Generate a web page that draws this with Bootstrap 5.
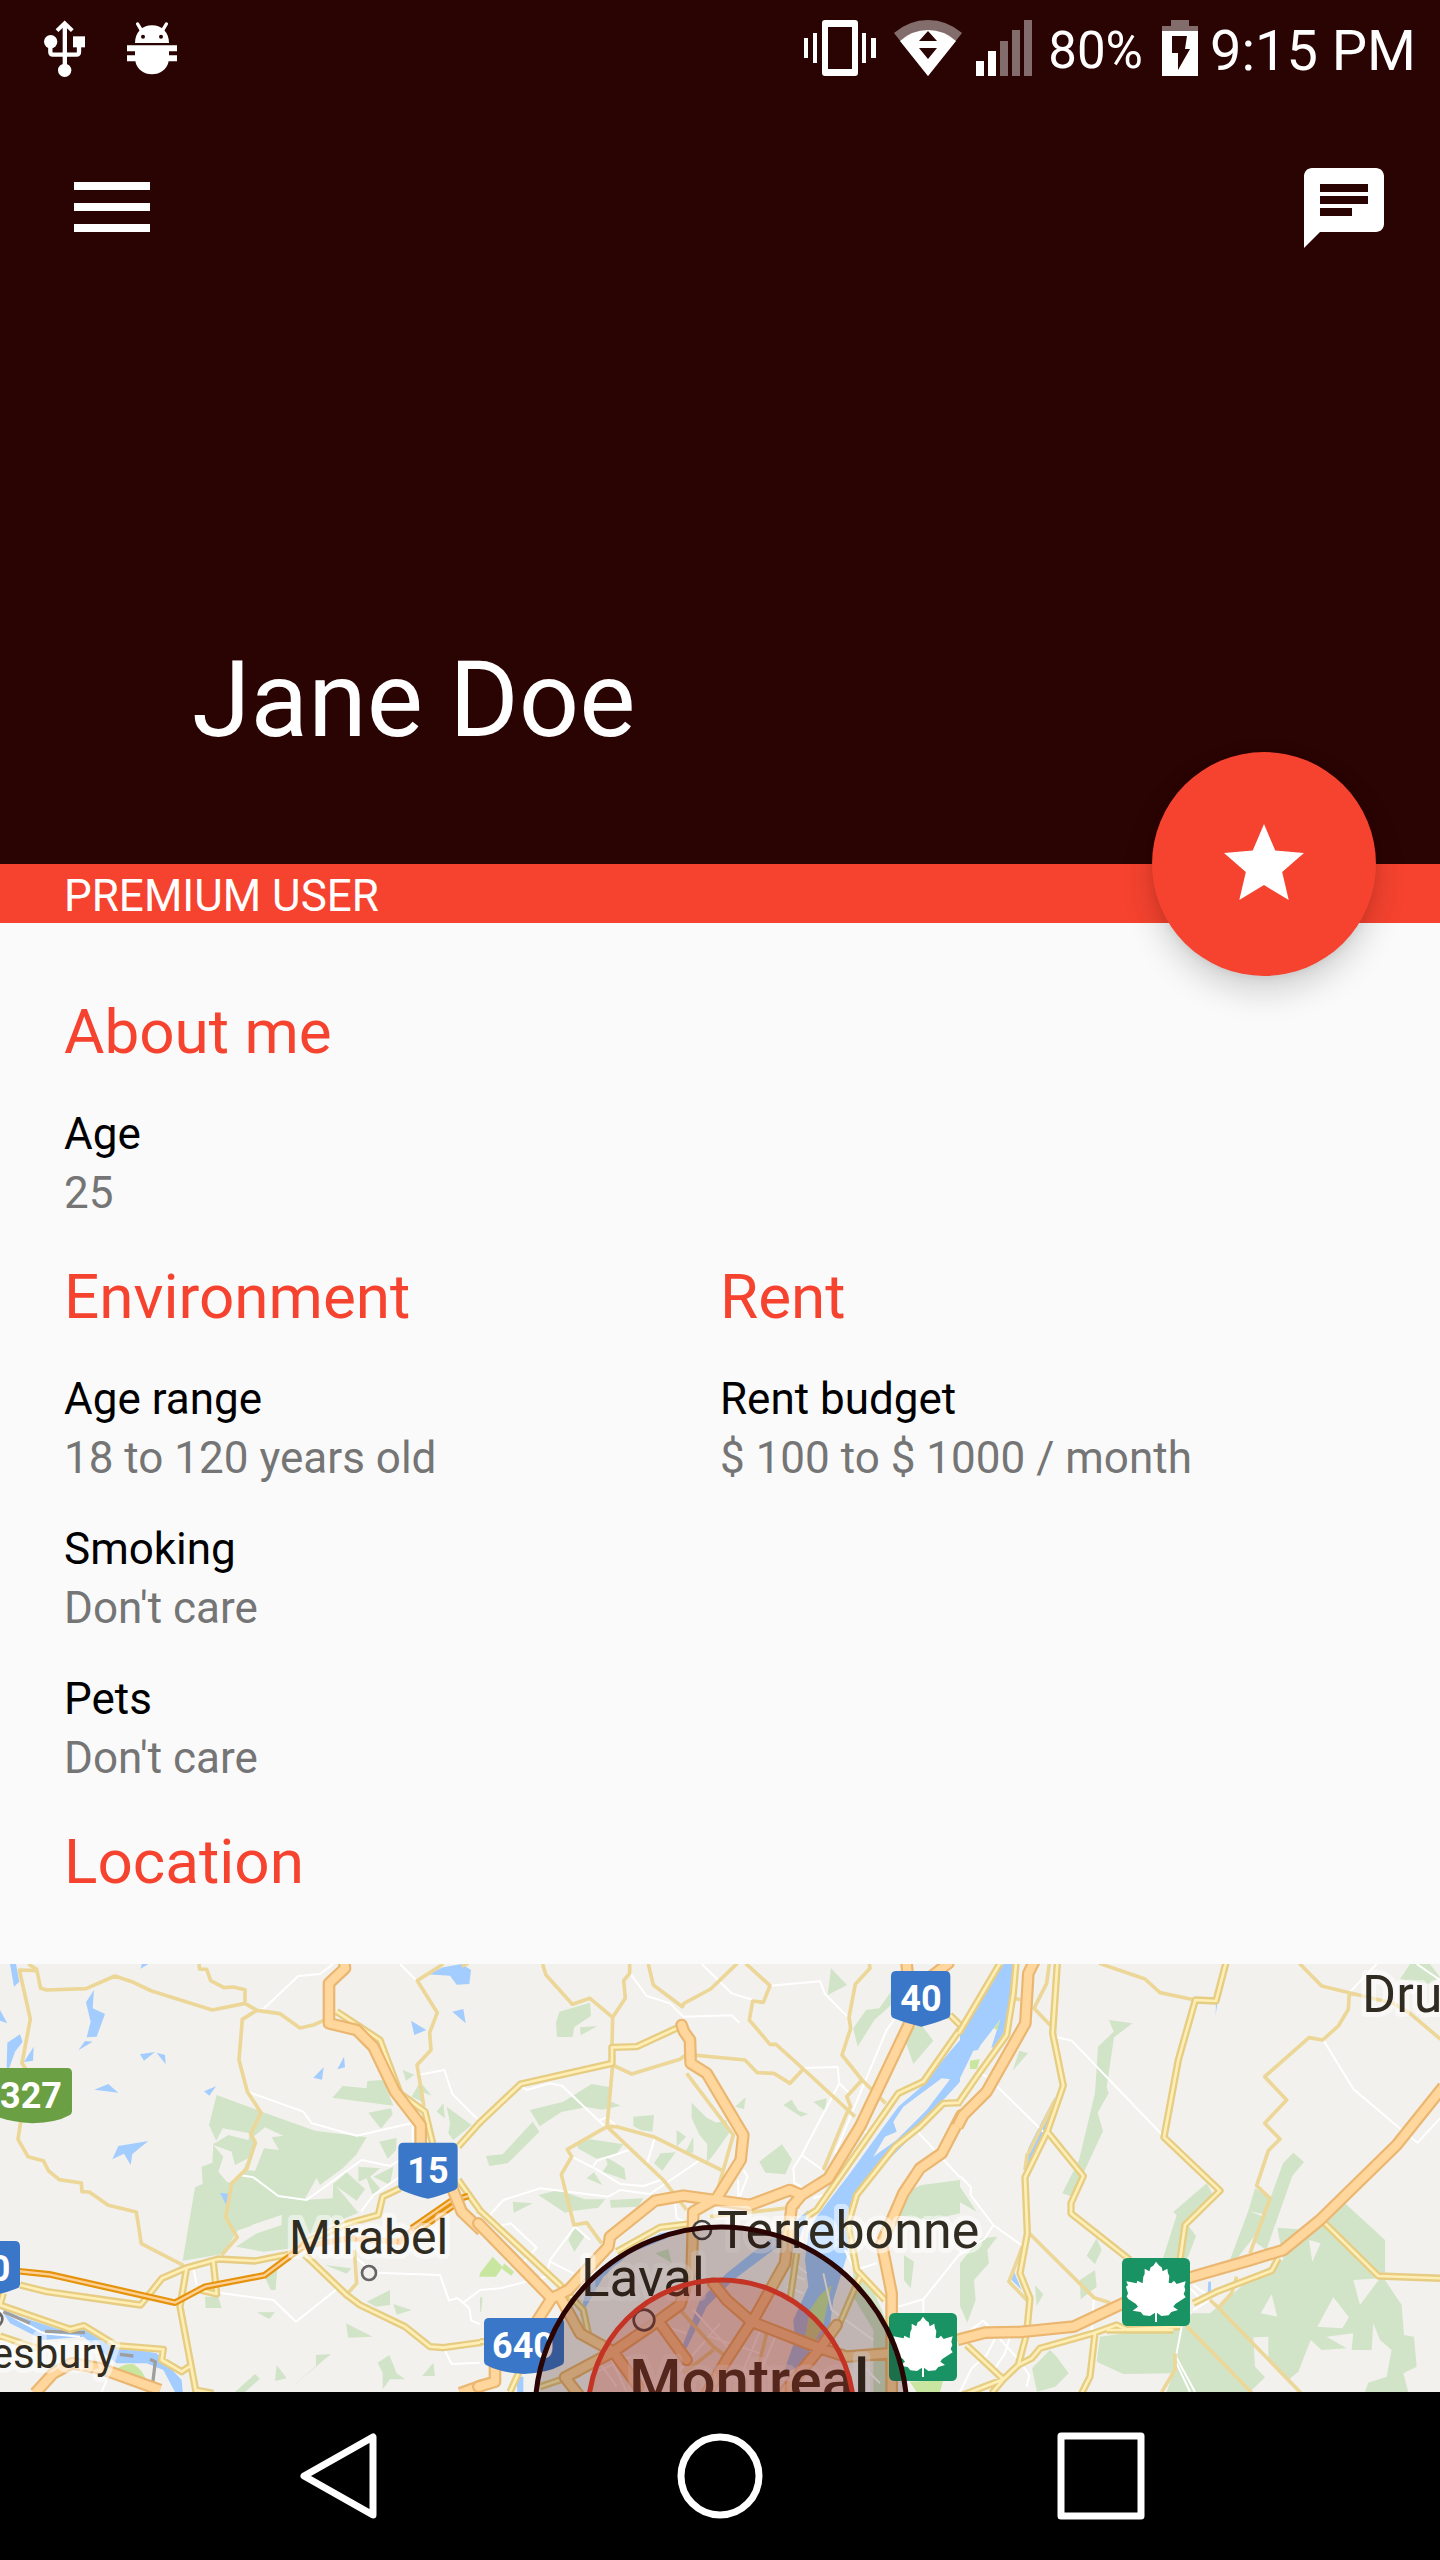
<!DOCTYPE html>
<html lang="en">
<head>
<meta charset="utf-8">
<meta name="viewport" content="width=device-width, initial-scale=1">
<title>Jane Doe</title>
<link href="https://cdn.jsdelivr.net/npm/bootstrap@5.3.0/dist/css/bootstrap.min.css" rel="stylesheet">
<style>
:root{--maroon:#2a0403;--accent:#f5432f}
body{font-family:Roboto,"Noto Sans",sans-serif;background:#fafafa;color:#000}
svg{display:block;flex-shrink:0}
button{background:none;border:0;padding:0;color:inherit}
.hero{background:var(--maroon);min-height:864px}
.status-bar{height:96px;padding:0 24px 0 44px}
.status-left{gap:42px}
.vibrate{margin-right:18px}
.wifi{margin-right:14px}
.signal{margin-right:16px}
.battery{margin:0 12px 0 19px}
.battery-level{font-size:51px;line-height:60px;padding-top:6px}
.clock{font-size:56px;line-height:66px;padding-top:6px}
.toolbar{padding:64px 48px 0 64px}
.icon-btn{width:96px;height:96px}
.profile-name{font-size:106px;line-height:124px;font-weight:400;padding:0 192px 102px}
.fab{right:64px;bottom:-112px;width:224px;height:224px;background:var(--accent);box-shadow:0 16px 32px rgba(0,0,0,.16),0 2px 10px rgba(0,0,0,.08);z-index:2}
.premium{background:var(--accent);font-size:44px;line-height:53px;padding:6px 64px 0}
.details{padding:35px 64px 61px}
.details h2{font-size:62px;line-height:82px;font-weight:400;color:var(--accent);margin:33px 0 32px}
.details dl{font-size:44px;line-height:59px;margin:0}
.details dt{font-weight:400}
.details dd{margin:0;color:#757575}
.details dd + dt{margin-top:32px}
.map{flex:1 1 428px;background:#f2f1ed}
.nav-bar{height:168px;padding:0 148px}
.park{fill:#d1e4c8}.lime{fill:#c8e6a0}.water{fill:#a3ccff}.land{fill:#f2f1ed}
.roads path,.roads use{fill:none;stroke-linejoin:round}
.lane{stroke:#fff;stroke-width:6}
.street{stroke:#ecd798;stroke-width:11}
.rail{stroke:#9e9e9e;stroke-width:10}
.sec-a{stroke:#e6cd83;stroke-width:22}.sec-b{stroke:#ffefb5;stroke-width:8}
.toll-a{stroke:#e6930c;stroke-width:20}.toll-b{stroke:#ffd197;stroke-width:7}
.hw-a{stroke:#eab670;stroke-width:38}.hw-b{stroke:#ffd69c;stroke-width:25}
.town{fill:#302c22;stroke:#fff;stroke-opacity:.5;stroke-width:10px;stroke-linejoin:round;paint-order:stroke}
.t42{font-size:42px}.t48{font-size:48px}.t52{font-size:52px}.t53{font-size:53px}.t60{font-size:60px;font-weight:500}
.route{fill:#fff;font-size:36px;font-weight:700;text-anchor:middle}
.blue{fill:#3a77c8}.dot{fill:#f2f1ed;fill-opacity:.8;stroke:#666;stroke-width:8}.dot-dark{stroke:#444}
</style>
</head>
<body class="d-flex flex-column min-vh-100">

<header class="hero position-relative d-flex flex-column text-white">
  <div class="status-bar d-flex justify-content-between align-items-center">
    <div class="status-left d-flex align-items-center">
      <svg width="41" height="57" viewBox="132 59 123 171" fill="#fff" role="img" aria-label="USB connected"><circle cx="152" cy="124" r="20"/><circle cx="194" cy="210" r="20"/><path d="M219 108h36v33h-36z"/><path d="M188 72h13v125h-13z"/><path d="M151 135v20q0 8 8 8h70q8 0 8-8v-20" fill="none" stroke="#fff" stroke-width="13"/><path d="M171 91l23-22 23 22" fill="none" stroke="#fff" stroke-width="12"/></svg>
      <svg width="50" height="53" viewBox="381 65 150 159" fill="#fff" role="img" aria-label="Debugging"><path d="M405 128C405 97 426 75 456 75S507 97 507 128z"/><path d="M413 71l10 17M499 71l-10 17" stroke="#fff" stroke-width="10" stroke-linecap="round"/><path d="M381 135h150v18h-24v12h24v18h-25c-5 25-25 39-50 39s-45-14-50-39h-25v-18h24v-12h-24z"/><circle cx="429" cy="109" r="6" fill="#2a0403"/><circle cx="483" cy="109" r="6" fill="#2a0403"/></svg>
    </div>
    <div class="d-flex align-items-center">
      <svg class="vibrate" width="72" height="56" viewBox="804 20 72 56" fill="#fff" role="img" aria-label="Vibrate"><path d="M804 38h4v20h-4zM813 33h4v30h-4zM862 33h4v30h-4zM871 38h5v20h-5z"/><path fill-rule="evenodd" d="M825 20h30q3 0 3 3v50q0 3-3 3h-30q-3 0-3-3V23q0-3 3-3zM828 27v42h24V27z"/></svg>
      <svg class="wifi" width="68" height="56" viewBox="894 20 68 56" fill="#fff" role="img" aria-label="Wi-Fi"><path d="M928 76L894 33Q909 20 928 20T962 33z" opacity=".42"/><path d="M928 76L900 41Q912 30 928 30T956 41z"/><path d="M928 31l9 10h-18zM919 48h18l-9 11z" fill="#2a0403"/></svg>
      <svg class="signal" width="56" height="56" viewBox="976 20 56 56" fill="#fff" role="img" aria-label="Signal"><path d="M976 61h8v15h-8zM988 51h8v25h-8z"/><path d="M1000 41h8v35h-8zM1012 30h8v46h-8zM1024 20h8v56h-8z" opacity=".42"/></svg>
      <span class="battery-level">80%</span>
      <svg class="battery" width="36" height="56" viewBox="1162 20 36 56" fill="#fff" role="img" aria-label="Charging"><path d="M1171 20h18v6h9v5h-36v-5h9z" opacity=".42"/><path fill-rule="evenodd" d="M1162 31h36v45h-36zM1172 36v17h6v17l12-21h-5l2-13z"/></svg>
      <span class="clock">9:15 PM</span>
    </div>
  </div>
  <div class="toolbar d-flex justify-content-between">
    <button type="button" class="icon-btn d-flex align-items-center justify-content-center" aria-label="Menu"><svg width="76" height="52" viewBox="0 0 76 52" fill="#fff"><path d="M0 0h76v8H0zM0 21h76v8H0zM0 42h76v8H0z"/></svg></button>
    <button type="button" class="icon-btn" aria-label="Messages"><svg width="96" height="96" viewBox="0 0 24 24" fill="#fff"><path d="M20 2H4c-1.100 0-2 .9-2 2v18l4-4h14c1.100 0 2-.9 2-2V4c0-1.100-.9-2-2-2zM6 9h12v2H6V9zm8 5H6v-2h8v2zm4-6H6V6h12v2z"/></svg></button>
  </div>
  <h1 class="profile-name mt-auto mb-0">Jane Doe</h1>
  <button type="button" class="fab position-absolute rounded-circle d-flex align-items-center justify-content-center" aria-label="Add to favourites"><svg width="96" height="96" viewBox="0 0 24 24" fill="#fff"><path d="M12 17.270L18.180 21l-1.640-7.030L22 9.240l-7.190-.61L12 2 9.190 8.630 2 9.240l5.460 4.730L5.820 21z"/></svg></button>
</header>

<div class="premium text-white">PREMIUM USER</div>

<main class="d-flex flex-column flex-grow-1">
  <div class="details">
    <section>
      <h2>About me</h2>
      <dl><dt>Age</dt><dd>25</dd></dl>
    </section>
    <div class="row g-0">
      <section class="col-6">
        <h2>Environment</h2>
        <dl>
          <dt>Age range</dt><dd>18 to 120 years old</dd>
          <dt>Smoking</dt><dd>Don't care</dd>
          <dt>Pets</dt><dd>Don't care</dd>
        </dl>
      </section>
      <section class="col-6">
        <h2>Rent</h2>
        <dl><dt>Rent budget</dt><dd>$ 100 to $ 1000 / month</dd></dl>
      </section>
    </div>
    <h2 class="mb-0">Location</h2>
  </div>

  <svg class="map w-100" viewBox="0 0 1440 428" preserveAspectRatio="xMidYMid slice" role="img" aria-label="Map of the Montreal area">
    <g transform="scale(.33333) translate(0 -72)">
      <!-- west: parks and lakes -->
      <path class="park" d="M650 465L785 515 945 572 1100 592 1068 645 1028 685 960 735 950 714 912 780 998 775 1000 728 1075 818 1000 850 925 885 880 925 790 935 708 920 770 880 845 855 845 825 712 872 670 942 548 962 585 742 608 732 605 680 637 668 640 612 650 605 627 555zM997 473L1028 438 1100 445 1102 423 1150 420 1180 497zM1208 390l35 14-25 18zM1105 518l68-13 5 18-35 43zM1260 425l35 42-30-12 10 35-40-20zM1310 515l20-25 5 45zM1340 500l75 55-55 45-15-20 5-30zM1138 605l52-12-2 38-25 25zM1075 680l65 5-30 25 30 35-20 25-20-55-25 10zM1000 732l40-35 55 50-25 35zM1120 710l60-30-10 55zM790 1000l42-15-5 65-15 0zM615 1070l40 0 10 34h-48zM770 1117h55l-17 20zM1100 1085l70-35v45l-42 5zM1180 1092l55 18-45 14zM1038 1150l80 40-73 3zM948 1245l45-3-100 85-18 15 73-64zM830 1275l30 40-35 8zM765 1302l15 14-45 40h-30zM1168 1245l22 55 25 18-45 0-22 30 0-50-15-30zM1300 1268l5 40-38 0zM975 975l80 10-15 16z"/>
      <path class="land" d="M668 565l82 15-5 20-60-15-40 25zM795 562l55 25-35 5 22 38-45-5-27 68-28-3 35-80-12-20zM640 615l55 20 10 40 40-20-20 45-30 30-15-5-25-30 15-45zM755 855l90-30-5 30-70 25z"/>
      <path class="lime" d="M340 1300Q360 1270 400 1272 430 1290 440 1325L420 1325z"/>
      <path class="water" d="M30 72h18l10 53-16 15zM282 150l-4 55 37 17-25 68-30 2 12-47-14-58zM0 210l22 40-22-8zM60 283l8 22-23 30-17 48h-8l2-75zM101 320l-2 42-27 4zM278 305l-23-2-20 28zM420 343l45-7-33 26zM470 338l25 7 2 28zM283 449l42-17 30 26zM648 439l-36 15 16 13zM355 618l90-15-48 39-5 33-20-34-35 17zM1032 350l3 32-23 6zM971 382l-5 37-26-6zM1233 242l46 28-36 15zM1390 207l7 43-40-35zM1280 103l50-21 55-10 28 18-5 42-38 2-20-27zM425 72h20l-23 14zM660 758l30 4-13 31zM0 1105l60 25 140 45 55-15 75 55 140 25 75 80 3 36h-23l-35-66-50-20-90 0-100-80-120 10-100-50z"/>
      <!-- centre: parks and rivers -->
      <g transform="translate(1440 0)">
        <path class="park" d="M238 215l92-27 3 40-50 33-5 30h-47l-3-42zM300 262l52-4-50 28zM150 510l100-25 85-53 55 10-3 40 35 15-55 12-48-8-75 15-65 43zM158 545l20 30-95 95-55 8-10-30 50-5zM460 530l62-5-5 50-35-5-22-12zM635 488l45 45 30 15 28-8 10 38-50 70-18 20 2-55-25-30-22-50zM590 570l28 20-28 30zM522 670l20-30 45-3-40 55zM640 590v48l-25 0zM765 500l32-28-5 35zM838 665l68-52 30 45-20 45-60-5zM910 495l25-16 20 33 30 10-22 8zM1000 485l40-10-5 38zM290 610l40-12 100 15-20 28-60 15-55-30zM320 715l22-18 25 38zM375 650l28 15 30 20 5 35-70-25 15-22zM175 765l60-15 80 28 60 0-20 25-80 10-20 5zM390 780l100-5-15 25-82 3zM98 785l60 5-57 28zM265 900l20-40 28 30-30 45zM525 940l40-13 10 42zM1053 85l48 50-58 30zM1120 265l38-55 40-5 35-50 0 40-50 45-50 80zM1270 285l50-35 40 52-60 70zM1245 770l80-35 115-15v100l-90 20-100-15zM1272 945l30 20-10 80-20-25zM0 1070l8 5-5 40-3 0zM1120 990l60 60 50 120v186h-50V1170l-60-100z"/>
        <path class="lime" d="M0 1000l38-50 30 30-20 30-50 0zM72 970l30 25-8 12-28-20zM1290 1325l100-5-10 36h-70z"/>
        <path class="water" d="M1440 300l-60 70-50 65-75 65-55 75-90 125-100 130-25 50-10 80 10 80-45 100 5 60-35 100 50-20 50-80 35-10 15-110 40-130 10-90 15-90 75-85 100-100 40-50 100-110zM985 810l-45 40-100 70-100 80-80 80-55 145 15 0 60-125 80-80 120-90 80-40zM600 870l-60 10-110 60-110 100-20 90 30-50 40-70 80-70 110-45zM1065 610l-40 80 15-10zM110 1310h20v46h-18z"/>
        <path class="land" d="M1410 418L1340 510 1250 600 1180 650 1215 590 1250 575 1240 545 1270 500 1385 415z"/>
        <path class="lime" d="M1055 1035l-25 120-25 50-30-15 15-80 30-45z"/>
      </g>
      <!-- east: parks and rivers -->
      <g transform="translate(2880 0)">
        <path class="park" d="M447 240l70 10-55 42-22 150 6 18-33 58 16 55-72 155-20 42-30-10 50-100 48-200 9-140 47-45zM178 332l26 8-46 52zM0 740l50 75-50-28zM1000 638l32 28-35 42-78 222-35-25 85-235zM885 745l48 30-10 50-58-12zM865 812l45 18-5 30-70 90-25 10zM740 730l20 35-80 85 28 38-25 65-75 5 42-132-10-10zM952 863L1050 870 1155 790 1275 900V1020L1325 1095 1332 1185 1362 1190 1370 1280 1330 1300 1345 1356H1215L1225 1328 1280 1310 1295 1230 1260 1200 1240 1150 1235 1230H1175L1180 1180 1100 1190 1160 1225 1085 1230 1052 1200 1015 1295 985 1320 925 1255 925 1190 880 1192 885 1280 915 1312 870 1356H620L640 1300 490 1302 410 1265 420 1190 600 1165 700 1120 750 1120 890 1000 970 960zM410 895l15 35-20 42-25-25zM360 1020l45-30 5 50-48 38zM225 1035l25 28-20 35zM270 1230l20 20 36 50-40 40-55 15-15-70zM0 970l60-75 52-5-30 40 5 40-45 50 5 60-25 68-22-50zM1350 72h60l30 40-30 20-90-15z"/>
        <path class="land" d="M1120 1072l47 60-20 33-75-5zM1047 900l35 10-25 55zM1180 1020l80-5-60 80zM935 1063l17 67-50-10z"/>
        <path class="water" d="M130 72h35l-15 180-50 70-60 10L0 415V275zM285 470l-20 100-65 115 5-60 40-80zM160 990l25 60-30-30zM745 1025h8v35h-10zM805 72l-8 25-4-25zM768 185l3 12-4 30z"/>
        <path class="land" d="M120 240l-28 90-60 40 30-55z"/>
        <path class="lime" d="M30 362l30-5-10 30-20 0zM120 240l-8 30-10-5z"/>
      </g>

      <g class="roads">
        <path class="lane" d="M770 211L790 207 895 108 960 102 1000 72M742 455L910 515 935 550 1070 587 1240 548M718 705L760 712 835 768 920 780 1085 660 1170 678 1200 660M1255 405L1333 390 1357 462 1440 545M1200 72L1252 124M655 1058L820 1080 888 1145 1010 1048M1060 945L1105 985M1130 998L1320 1005 1347 1082 1372 1074 1408 1105 1414 1142 1440 1152M1390 1088L1440 1050M580 985L590 1035M1333 1228L1355 1272 1440 1268M1083 815L1120 765 1200 710M0 1110L130 1180 240 1190M100 1340L150 1290M1238 555V610M305 1356L320 1320"/>
        <path class="street" d="M85 72L110 88 122 145 140 150 258 146 345 108 400 127 455 153 637 210 735 190 770 211 840 221 900 264 940 255 985 235M110 92L58 90 91 237 66 370 80 390M62 545L54 598 84 650 130 662 146 693 178 719 244 729 246 755 268 756 325 796 409 816 424 911 550 976M597 72L599 87 620 88 632 122 672 143 700 141 735 149 735 190M770 211L727 238 717 360 742 455 783 518 752 582 766 607 741 685 695 730 677 832 712 892 665 945M1330 72L1252 122 1312 218 1289 278 1293 330 1251 375 1272 500M1405 70L1385 78M1063 930L1070 1030 1045 1058"/>
        <path class="rail" d="M10 1115L90 1150M135 1174L255 1178M360 1243L400 1248M450 1258L466 1265 458 1330"/>
        <path class="sec-a" d="M60 1035L140 1055 422 1095 486 1015 560 983 655 957 765 963 870 942 930 900 1045 850 1135 825 1148 770 1200 745M640 965L650 1062 600 1050M560 983L540 1100 588 1356M588 1350L640 1360M915 945L1040 1065 1080 1095 1215 1160 1290 1220 1330 1223 1445 1207M10 1060L0 1095 210 1168 252 1157 350 1217 490 1228 485 1260 545 1295 575 1275M0 1188L110 1225M1010 215L1140 300 1200 460 1275 515 1298 610M1375 620L1442 545M1375 720L1442 814"/>
        <path class="sec-b" d="M60 1035L140 1055 422 1095 486 1015 560 983 655 957 765 963 870 942 930 900 1045 850 1135 825 1148 770 1200 745M640 965L650 1062 600 1050M560 983L540 1100 588 1356M588 1350L640 1360M915 945L1040 1065 1080 1095 1215 1160 1290 1220 1330 1223 1445 1207M10 1060L0 1095 210 1168 252 1157 350 1217 490 1228 485 1260 545 1295 575 1275M0 1188L110 1225M1010 215L1140 300 1200 460 1275 515 1298 610M1375 620L1442 545M1375 720L1442 814"/>
        <path class="toll-a" d="M50 993L148 1003 525 1088 615 1040 793 1006 915 915M1235 865L1350 785 1405 768M1270 860L1370 790"/>
        <path class="toll-b" d="M50 993L148 1003 525 1088 615 1040 793 1006 915 915M1235 865L1350 785 1405 768M1270 860L1370 790"/>
        <path d="M905 920L1050 895 1200 905 1240 865" stroke="#fbc98d" stroke-width="18"/>
        <path class="hw-a" d="M1033 68L1035 85 987 130 987 250 1070 270 1120 320 1185 455 1262 555V620M1355 740L1385 815 1445 872M105 1360L160 1300 215 1270 300 1285 480 1350M1380 1360L1450 1335"/>
        <path class="hw-b" d="M1033 68L1035 85 987 130 987 250 1070 270 1120 320 1185 455 1262 555V620M1355 740L1385 815 1445 872M105 1360L160 1300 215 1270 300 1285 480 1350M1380 1360L1450 1335"/>
      </g>

      <g class="roads" transform="translate(1440 0)">
        <path class="lane" d="M449 98L500 168 570 190 610 230 755 226 778 248M665 72L755 160 820 180M870 137L1020 124 1035 162 1105 232M970 384L1073 381 1078 430 1110 462M1078 430L965 645 1028 690M965 645L940 685 943 728 965 742M1245 235L1220 270 1065 640M125 440L140 450 210 430 247 438 380 565M355 542L380 533 415 562M525 592L498 680M275 650L350 688 420 732 490 738 542 720M340 678L352 662 448 630M660 660L510 762 420 750 385 770 180 745 70 780 25 830M790 690L803 710 780 768M775 720V770M1315 578L1440 712M1150 570L1170 585 1050 760 1000 775M585 790L590 835 630 850M60 858L92 850 170 923 132 965M0 1050L60 1045 198 1010 210 960 285 860 330 900M210 965L280 1000M1445 935L1330 1078 1255 1100M1330 1078V1120M1095 930L1125 990 1190 970M1030 1000L1055 1110 1180 1200M1100 1230L1200 1330M390 1250L440 1356M360 1270L410 1340M340 1300L450 1250M640 1110L760 1240M600 1290L720 1150M690 1190L840 1240M850 1150L790 1290M890 1180L840 1300M500 1140L620 1180M930 960L980 1000M930 1000L975 1020M920 1040L970 1060"/>
        <path class="street" d="M188 72L198 105 277 193 330 175 398 232 436 175 431 122 449 100V72M398 232L396 320M398 375L381 560 262 628 275 650 244 703 282 855 320 848 365 910M398 375L455 402 600 358 620 343 795 360 832 398 882 400 930 430 970 387 1125 530M505 72L520 135 607 200 612 190 692 147 772 70M797 70L870 137 850 187 818 183 808 240 870 313 888 313 970 387M1168 72L1170 85 1126 133 1107 232 1112 265 1086 345 1146 420 1217 490M1146 420L1100 470 1112 500 1100 520 1030 690M381 560L410 560 525 592 730 693M381 560L550 720 620 810M620 400L760 585 710 760M690 830L960 800M600 1110L700 1220 740 1250M610 1300L700 1230M860 1180L830 1300"/>
        <path class="sec-a" d="M-4 551L122 432 396 370V322L470 320 600 260M-4 808L240 1035 310 1110 325 1180M1444 262L1330 425 1255 460 1010 810 980 830M1410 225L1445 260M1444 488L1390 490 1320 560 1245 620 1130 765 1105 850 1130 990 1215 1080M410 935L540 862 640 850M950 940L930 1080M1140 1010L1075 1160M180 1340L300 1300M120 1290L90 1356M0 1205H20"/>
        <path class="sec-b" d="M-4 551L122 432 396 370V322L470 320 600 260M-4 808L240 1035 310 1110 325 1180M1444 262L1330 425 1255 460 1010 810 980 830M1410 225L1445 260M1444 488L1390 490 1320 560 1245 620 1130 765 1105 850 1130 990 1215 1080M410 935L540 862 640 850M950 940L930 1080M1140 1010L1075 1160M180 1340L300 1300M120 1290L90 1356M0 1205H20"/>
        <path class="hw-a" stroke-linecap="round" d="M605 255L612 275 630 300 632 370 680 400 790 585 782 660 710 775M-5 850L215 1075 160 1160M215 1075L265 1050 385 920 390 890 525 782 610 767 810 795 930 750 965 765 1045 715 1140 560 1295 235 1280 72M1340 120L1405 70M1445 525L1385 640 1320 685 1270 760 1205 910 1235 1060V1360M710 775L640 815 635 990 600 1095 510 1160 400 1235 255 1312M965 765L935 800 915 970 820 1140M700 1030L740 1080 815 1145 1020 1225 1100 1250 1225 1240M815 1145L740 1260 680 1360M240 1070L300 1180 400 1235 475 1340M1070 1155L1020 1225 910 1360M540 1150L620 1260M-5 1340L45 1325V1270M255 1312L300 1370"/>
        <path class="hw-b" stroke-linecap="round" d="M605 255L612 275 630 300 632 370 680 400 790 585 782 660 710 775M-5 850L215 1075 160 1160M215 1075L265 1050 385 920 390 890 525 782 610 767 810 795 930 750 965 765 1045 715 1140 560 1295 235 1280 72M1340 120L1405 70M1445 525L1385 640 1320 685 1270 760 1205 910 1235 1060V1360M710 775L640 815 635 990 600 1095 510 1160 400 1235 255 1312M965 765L935 800 915 970 820 1140M700 1030L740 1080 815 1145 1020 1225 1100 1250 1225 1240M815 1145L740 1260 680 1360M240 1070L300 1180 400 1235 475 1340M1070 1155L1020 1225 910 1360M540 1150L620 1260M-5 1340L45 1325V1270M255 1312L300 1370"/>
      </g>

      <g class="roads" transform="translate(2880 0)">
        <path class="lane" d="M285 290L335 302 610 588M55 398L80 410M110 438L250 575M0 708L33 742 32 765 100 855 188 918M100 855L75 895 0 945M1250 72L1168 158M1370 72L1440 120M1090 300L1180 447 1325 570M1350 590L1373 608 1440 535M402 1073L395 1170M0 1356L35 1285 80 1245 108 1190M20 1180L70 1142 175 1258M150 1190L135 1240 105 1285M190 1280L208 1305 200 1340M665 1160L648 1250 705 1356M650 1270L690 1356M690 1045L725 1080 750 1085M700 1110L750 1080M700 1035L735 1060"/>
        <path class="street" d="M418 70L555 117 600 158 705 180M165 175L180 180M268 72L260 130 222 205 270 255M1018 70L1085 138 1168 158 1300 190 1350 220 1442 298M1168 158L1165 208 1135 258 1088 300 1047 293 914 410 980 480 914 550 960 597 925 632 890 737 930 775 870 940M830 1010L815 1060 775 1103 985 1320 1022 1358M750 1080L775 1103M210 882L402 1073 450 1088M202 640L195 690M188 918L147 1025 205 1085M680 1158L875 1358M645 1240L645 1290 605 1356M285 480L205 640"/>
        <path class="sec-a" d="M120 70L-4 280M168 70L160 160 140 285 50 410-4 488M292 70L278 280 310 437 262 575 195 712 202 880 180 1000 210 1075 200 1180 175 1275 130 1318 95 1360M262 575L370 708 333 790V820L510 960M798 68L768 183 706 180 655 360 612 592 780 752 675 855 660 960M700 1090L770 1055 935 992 955 955M1095 850L1255 1008 1444 1015M660 1160L500 1168 470 1155 400 1180 240 1225 215 1255 175 1275M405 1180L390 1310 365 1360M20 1215L130 1318-4 1370M440 1170H640"/>
        <path class="sec-b" d="M120 70L-4 280M168 70L160 160 140 285 50 410-4 488M292 70L278 280 310 437 262 575 195 712 202 880 180 1000 210 1075 200 1180 175 1275 130 1318 95 1360M262 575L370 708 333 790V820L510 960M798 68L768 183 706 180 655 360 612 592 780 752 675 855 660 960M700 1090L770 1055 935 992 955 955M1095 850L1255 1008 1444 1015M660 1160L500 1168 470 1155 400 1180 240 1225 215 1255 175 1275M405 1180L390 1310 365 1360M20 1215L130 1318-4 1370M440 1170H640"/>
        <path class="hw-a" d="M225 60L205 100 196 250 80 455 10 525-8 560M1450 440L1310 615 1080 840 970 930 865 962 715 1005 600 1040 490 1090 340 1160 180 1176 75 1178-8 1200"/>
        <path class="hw-b" d="M225 60L205 100 196 250 80 455 10 525-8 560M1450 440L1310 615 1080 840 970 930 865 962 715 1005 600 1040 490 1090 340 1160 180 1176 75 1178-8 1200"/>
      </g>

      <!-- route shields and town markers -->
      <path d="M-20 384H202q14 0 14 14V514q0 8-8 12Q170 548 97 550 20 545-20 525z" fill="#6b9f44"/>
      <g class="blue">
        <path d="M1211 608h146q16 0 16 16V738q0 8-8 12Q1320 768 1284 776 1245 768 1203 750q-8-4-8-12V624q0-16 16-16z"/>
        <path d="M-60 903H44q16 0 16 16v114q0 8-8 12Q20 1058 -5 1062z"/>
        <path d="M2689 93h146q16 0 16 16V223q0 8-8 12Q2800 252 2764 260 2725 252 2681 235q-8-4-8-12V109q0-16 16-16z"/>
        <path d="M1468 1134h208q16 0 16 16v114q0 8-8 12Q1640 1300 1572 1302 1500 1298 1460 1276q-8-4-8-12V1150q0-16 16-16z"/>
      </g>
      <g id="maple" transform="translate(2880 0)">
        <rect x="486" y="954" width="204" height="204" rx="16" fill="#199363"/>
        <path fill="#fff" d="M588 965L598 977 605 982 608 994 622 986 624 1000 628 1008 626 1028 634 1030 642 1022 650 1032 677 1024 673 1040 676 1050 671 1062 677 1072 646 1092 640 1100 654 1110 634 1116 626 1126 604 1128 591 1118V1146H585V1118L570 1128 550 1126 542 1116 518 1112 534 1100 528 1092 506 1078 500 1070 504 1060 498 1040 504 1036 499 1024 530 1030 532 1022 548 1030 550 1010 554 1002 554 986 568 994 572 982 580 977z"/>
      </g>
      <use href="#maple" x="-699" y="165"/>
      <g class="dot"><circle cx="1107" cy="999" r="21"/><circle cx="-14" cy="1137" r="21"/><circle class="dot-dark" cx="2106" cy="870" r="27"/><circle class="dot-dark" cx="1932" cy="1140" r="31"/></g>
    </g>
    <text class="town t48" x="289" y="290">Mirabel</text>
    <text class="town t42" x="116" y="404" text-anchor="end">esbury</text>
    <text class="town t52" x="717" y="284">Terrebonne</text>
    <text class="town t53" x="581" y="332">Laval</text>
    <text class="town t60" x="629" y="437">Montreal</text>
    <text class="town t52" x="1362" y="48">Dru</text>
    <text class="route" x="31" y="144">327</text>
    <text class="route" x="428" y="219">15</text>
    <text class="route" x="0" y="317">0</text>
    <text class="route" x="921" y="47">40</text>
    <text class="route" x="523" y="394">640</text>
    <!-- search radius -->
    <circle cx="721" cy="449" r="186" fill="#2a0403" fill-opacity=".25" stroke="#2a0403" stroke-width="5"/>
    <circle cx="721" cy="449" r="133" fill="#c83223" fill-opacity=".25" stroke="#c43324" stroke-width="5"/>
  </svg>
</main>

<nav class="nav-bar bg-black d-flex align-items-center" aria-label="System">
  <button type="button" class="flex-fill d-flex justify-content-center" aria-label="Back"><svg width="88" height="88" viewBox="0 0 88 88" fill="none" stroke="#fff" stroke-width="7" stroke-linejoin="round"><path d="M78 5V83L9 44z"/></svg></button>
  <button type="button" class="flex-fill d-flex justify-content-center" aria-label="Home"><svg width="88" height="88" viewBox="0 0 88 88" fill="none" stroke="#fff" stroke-width="7"><circle cx="44" cy="44" r="39"/></svg></button>
  <button type="button" class="flex-fill d-flex justify-content-center" aria-label="Recent apps"><svg width="88" height="88" viewBox="0 0 88 88" fill="none" stroke="#fff" stroke-width="7" stroke-linejoin="round"><path d="M4 4H84V84H4z"/></svg></button>
</nav>
<script src="https://cdn.jsdelivr.net/npm/bootstrap@5.3.0/dist/js/bootstrap.bundle.min.js"></script>
</body>
</html>
